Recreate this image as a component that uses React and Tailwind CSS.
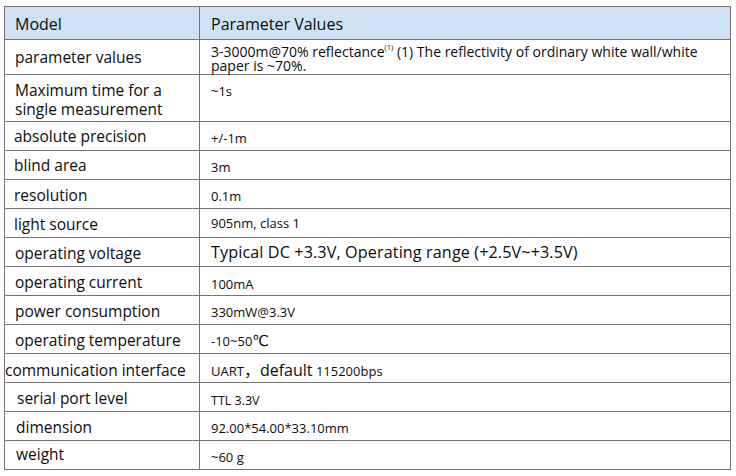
import React from "react";

const rows = [
  {
    h: "h-[35px]",
    left: "parameter values",
    lc: "pl-[10px] pt-0",
    rc: "pt-[3px]",
    right: (
      <span className="text-[14px] leading-[14px]">
        3-3000m@70% reflectance<sup className="text-[7.5px] leading-none align-[3px]">(1)</sup> (1) The reflectivity of ordinary white wall/white
        <br />
        paper is ~70%.
      </span>
    ),
  },
  {
    h: "h-[47px]",
    left: (
      <span className="leading-[19px]">
        Maximum time for a
        <br />
        single measurement
      </span>
    ),
    lc: "pl-[10px] pt-[4px]",
    rc: "items-start pt-[7px]",
    right: <span className="text-[13px]">~1s</span>,
  },
  { left: "absolute precision", lc: "pl-[9px] pt-0", rc: "pl-[10px] pt-[3px]", right: <span className="text-[13px]">+/-1m</span> },
  { left: "blind area", lc: "pl-[9px] pt-0", rc: "pt-[4px]", right: <span className="text-[13px]">3m</span> },
  { left: "resolution", lc: "pl-[9px] pt-[2px]", rc: "pt-[4px]", right: <span className="text-[13px]">0.1m</span> },
  { left: "light source", lc: "pl-[9px] pt-[2px]", rc: "pt-0", right: <span className="text-[13px]">905nm, class 1</span> },
  {
    left: "operating voltage",
    lc: "pl-[10px] pt-[2px]",
    rc: "pt-0",
    right: <span className="text-[16.2px] tracking-[0.1px]">Typical DC +3.3V, Operating range (+2.5V~+3.5V)</span>,
  },
  { left: "operating current", lc: "pl-[10px] pt-[2px]", rc: "pt-[6px]", right: <span className="text-[13px]">100mA</span> },
  { left: "power consumption", lc: "pl-[10px] pt-[2px]", rc: "pt-[4px]", right: <span className="text-[13px]">330mW@3.3V</span> },
  {
    left: "operating temperature",
    lc: "pl-[10px] pt-[2px]",
    rc: "pt-[3px]",
    right: (
      <span className="text-[13px]">
        -10~50<span className="text-[15px]" style={{ fontFamily: '"DejaVu Sans", "Noto Sans CJK SC", sans-serif' }}>℃</span>
      </span>
    ),
  },
  {
    left: "communication interface",
    lc: "pl-0 pt-[4px] whitespace-nowrap",
    rc: "pt-[4px]",
    right: (
      <span className="text-[13px] whitespace-pre">
        UART<span className="text-[16px]">，default</span> 115200bps
      </span>
    ),
  },
  { left: "serial port level", lc: "pl-[12px] pt-[2px]", rc: "pt-[7px]", right: <span className="text-[12.5px]">TTL 3.3V</span> },
  { left: "dimension", lc: "pl-[11px] pt-[2px]", rc: "pt-[4px]", right: <span className="text-[13px]">92.00*54.00*33.10mm</span> },
  { left: "weight", lc: "pl-[11px] pb-[3px]", rc: "pt-[4px]", right: <span className="text-[13px]">~60 g</span>, last: true },
];

export default function App() {
  return (
    <div
      className="w-[736px] h-[476px] bg-white pt-[6px] pl-[4px] text-[#0d0d0d]"
      style={{ fontFamily: '"Open Sans", "Noto Sans CJK SC", sans-serif' }}
    >
      <div className="w-[727px] border border-[#747474]">
        <div className="grid grid-cols-[195px_1fr] h-[33px] bg-[#cfe2f3] border-b border-[#747474] text-[16px]">
          <div className="flex items-center pl-[10px] pt-[1px] border-r border-[#747474]">Model</div>
          <div className="flex items-center pl-[11px] pt-[1px]">Parameter Values</div>
        </div>
        {rows.map((r, i) => (
          <div
            key={i}
            className={`grid grid-cols-[195px_1fr] ${r.h || (r.last ? "h-[28px]" : "h-[29px]")} ${r.last ? "" : "border-b border-[#747474]"}`}
          >
            <div className={`flex items-center border-r border-[#747474] text-[15.5px] leading-[20px] ${r.lc}`}>{r.left}</div>
            <div className={`flex items-center pl-[11px] leading-[18px] ${r.rc}`}>{r.right}</div>
          </div>
        ))}
      </div>
    </div>
  );
}
